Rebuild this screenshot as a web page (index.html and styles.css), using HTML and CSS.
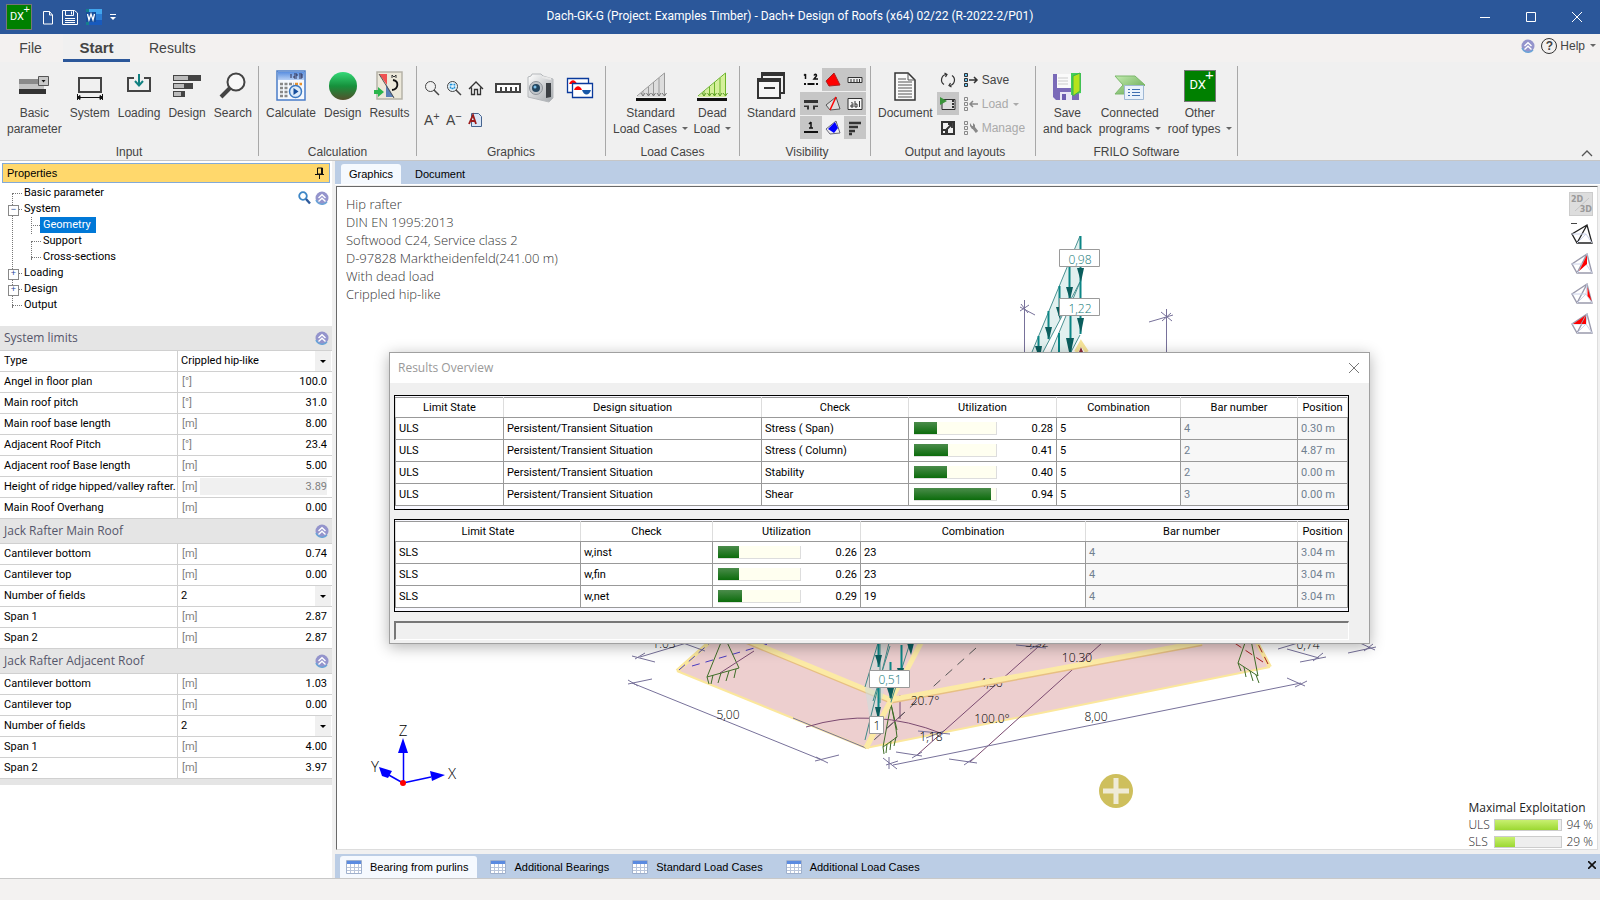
FILE: index.html
```html
<!DOCTYPE html>
<html lang="en">
<head>
<meta charset="utf-8">
<title>Dach-GK-G - Dach+ Design of Roofs</title>
<link rel="stylesheet" href="styles.css">
</head>
<body>
<svg class="defs" aria-hidden="true">
  <defs>
    <linearGradient id="gBall" x1="0" y1="0" x2="0" y2="1"><stop offset="0" stop-color="#35d978"/><stop offset=".5" stop-color="#16913c"/><stop offset="1" stop-color="#54502c"/></linearGradient>
    <linearGradient id="gCal" x1="0" y1="0" x2="0" y2="1"><stop offset="0" stop-color="#5b8fe0"/><stop offset="1" stop-color="#b7d0f5"/></linearGradient>
    <linearGradient id="gCam" x1="0" y1="0" x2="1" y2="1"><stop offset="0" stop-color="#ffffff"/><stop offset="1" stop-color="#a4a8ac"/></linearGradient>
    <linearGradient id="gGreen" x1="0" y1="0" x2="1" y2="1"><stop offset="0" stop-color="#c3ecb0"/><stop offset="1" stop-color="#5fa24c"/></linearGradient>
    <symbol id="chev" viewBox="0 0 14 14"><circle cx="7" cy="7" r="6.500" fill="#9494cc"/><path d="M1 9a6.500 6.500 0 0 0 11 2" fill="none" stroke="#6aa5d8" stroke-width="1.500"/><path d="M3.500 7L7 3.800 10.500 7M3.500 10.500L7 7.300l3.500 3.200" fill="none" stroke="#fff" stroke-width="1.400"/></symbol>
    <symbol id="tbl" viewBox="0 0 16 14"><path d="M.5.5h15v13H.5z" fill="#fff" stroke="#9fb0cc"/><path d="M1 1h14v3H1z" fill="#5b8be0"/><path d="M1 7.500h14M1 10.500h14M4.500 4v9M8.500 4v9M12.500 4v9" stroke="#b9c5da"/></symbol>
    <symbol id="roof" viewBox="0 0 22 22"><path d="M16 1L1 11l5 9h15zM16 1L6 20" fill="none" stroke="#9a9aac" stroke-width="1.400"/><path d="M1 11h14l6 9M15 11L6 20M15 11l1-10" fill="none" stroke="#ccd3ea"/></symbol>
  </defs>
</svg>
<div class="app">
  <header class="titlebar">
    <div class="quick">
      <span class="dx dx-small"><b>DX</b><i>+</i></span>
      <button aria-label="New"><svg width="12" height="15"><path d="M1.500 1.500h6l3 3.500v9h-9zM7.500 1.500V5h3" fill="none" stroke="#fff"/></svg></button>
      <button aria-label="Save"><svg width="16" height="15"><path d="M.5.5h12l3 2.500v11.500H.5zM3.500.5v5h8v-5M9.500 1.500v3M3 8.500h10M3 10.500h10M3 12.500h10" fill="none" stroke="#fff"/></svg></button>
      <button aria-label="Word"><svg width="16" height="16"><path d="M0 0h4v16H0z" fill="#157f8c"/><path d="M3 0h13v5H3z" fill="#41a5ee"/><path d="M3 5h13v6H3z" fill="#2b7cd3"/><path d="M3 11h13v5H3z" fill="#185abd"/><path d="M0 3h10v10H0z" fill="#174f9c"/><path d="M1.500 5l1.500 6 2-6 2 6 1.500-6" fill="none" stroke="#fff" stroke-width="1.300"/></svg></button>
      <button aria-label="Customize"><svg width="6" height="8"><path d="M0 1.500h6" stroke="#fff"/><path d="M0 4h6L3 7z" fill="#fff"/></svg></button>
    </div>
    <h1>Dach-GK-G (Project: Examples Timber) - Dach+ Design of Roofs (x64) 02/22 (R-2022-2/P01)</h1>
    <div class="winbtns">
      <button aria-label="Minimize"><svg width="10" height="10"><path d="M0 5.500h10" stroke="#fff"/></svg></button>
      <button aria-label="Maximize"><svg width="10" height="10"><path d="M.5.5h9v9h-9z" fill="none" stroke="#fff"/></svg></button>
      <button aria-label="Close"><svg width="10" height="10"><path d="M0 0l10 10M10 0L0 10" stroke="#fff"/></svg></button>
    </div>
  </header>

  <nav class="menu">
    <button class="m-file">File</button>
    <button class="m-start">Start</button>
    <button class="m-results">Results</button>
    <div class="help">
      <svg width="14" height="14"><use href="#chev"/></svg>
      <button><span class="q">?</span>Help<i class="car"></i></button>
    </div>
  </nav>

  <section class="ribbon">
    <div class="grp g-input">
      <div class="items">
        <button class="big"><svg width="32" height="32"><path d="M1 9h25v5H1z" fill="#8a8a8a"/><path d="M1 14h25v5H1z" fill="#c4c4c4"/><path d="M1 19h27v5H1z" fill="#333"/><path d="M20.500 6.500h10v9h-10z" fill="#c8c8c8" stroke="#555"/><path d="M23.500 10h4l-2 2.500z" fill="#111"/></svg><span>Basic<br>parameter</span></button>
        <button class="big"><svg width="32" height="32"><path d="M5 8h22v14H5z" fill="none" stroke="#444" stroke-width="2"/><path d="M3.500 24v6M28.500 24v6M3 27.500h26M3 27.500l3-2v4zM29 27.500l-3-2v4z" stroke="#111" fill="#111"/></svg><span>System</span></button>
        <button class="big"><svg width="32" height="32"><path d="M11 8H5v13h22V8h-6" fill="none" stroke="#444" stroke-width="2"/><path d="M16 4v10M12 11l4 4.500 4-4.500" fill="none" stroke="#108080" stroke-width="2"/></svg><span>Loading</span></button>
        <button class="big"><svg width="32" height="32"><path d="M2 5h28v6H2zM2 13h20v6H2zM2 21h12v6H2z" fill="#444"/><path d="M3 6h14v4H3zM3 14h10v4H3zM3 22h7v4H3z" fill="#bbb"/></svg><span>Design</span></button>
        <button class="big"><svg width="32" height="32"><circle cx="19" cy="12" r="8.500" fill="#f8f8f8" stroke="#444" stroke-width="2"/><path d="M13 18l-9 9" stroke="#444" stroke-width="4"/></svg><span>Search</span></button>
      </div>
      <h2>Input</h2>
    </div>
    <div class="grp g-calc">
      <div class="items">
        <button class="big"><svg width="32" height="32"><path d="M2 1h28v29H2z" fill="#f5f8fd" stroke="#4a7cc8" stroke-width="1.500"/><path d="M3 2h26v8H3z" fill="url(#gCal)"/><path d="M16 4v4M19 4h3v2h-3v2h3M24 4h3v4h-3M24 6h3" stroke="#335" fill="none"/><path d="M5 14h14M5 18h9M5 22h8M5 26h9" stroke="#888" stroke-width="2.500" stroke-dasharray="3 1.500"/><path d="M20 14h7" stroke="#e8902a" stroke-width="2.500" stroke-dasharray="3 1.500"/><circle cx="20.500" cy="21.500" r="6" fill="#dcebfa" stroke="#3b78c0" stroke-width="1.500"/><path d="M18.500 18v7l5-3.500z" fill="#174f9c"/></svg><span>Calculate</span></button>
        <button class="big"><svg width="32" height="32"><circle cx="16" cy="16" r="14" fill="url(#gBall)"/></svg><span>Design</span></button>
        <button class="big"><svg width="32" height="32"><path d="M4 2h25v27H4z" fill="#ece8da" stroke="#b5b2a8" stroke-width="1.500"/><path d="M6 4h8v11z" fill="#f05050"/><path d="M13 14v13h8z" fill="#5a80b8"/><path d="M6 4l15 24" stroke="#555"/><path d="M20 10c6 1 6 9-1 10" fill="none" stroke="#111" stroke-width="1.800"/><path d="M19 8V5l2 2 2-2v3" fill="none" stroke="#333"/><path d="M1 20h4v-3l6 5-6 5v-3H1z" fill="#2bb54c"/></svg><span>Results</span></button>
      </div>
      <h2>Calculation</h2>
    </div>
    <div class="grp g-gfx">
      <div class="items">
        <div class="mini">
          <button aria-label="Zoom"><svg width="16" height="16"><circle cx="6.500" cy="6.500" r="5" fill="none" stroke="#444"/><path d="M10 10l5 5" stroke="#444" stroke-width="1.500"/></svg></button>
          <button aria-label="Zoom window"><svg width="16" height="16"><circle cx="6.500" cy="6.500" r="5" fill="#eaf6fd" stroke="#444"/><path d="M4.500 4.500h4v4h-4z" fill="none" stroke="#1e90d8" stroke-width="1.500" stroke-dasharray="2 1"/><path d="M10 10l5 5" stroke="#444" stroke-width="1.500"/></svg></button>
          <button aria-label="Home"><svg width="16" height="16"><path d="M1 9l7-7 7 7M3.500 7.500v7h3v-5h3v5h3v-7" fill="none" stroke="#333" stroke-width="1.300"/></svg></button>
          <button aria-label="Larger text" class="let"><span>A<sup>+</sup></span></button>
          <button aria-label="Smaller text" class="let"><span>A<sup>−</sup></span></button>
          <button aria-label="Font"><svg width="16" height="16"><path d="M3.500 1.500h7l3 3v10h-10z" fill="#dbe7f8" stroke="#46648f"/><path d="M1 12L5 3l3 9M3 9h4" stroke="#9c1c1c" stroke-width="1.800" fill="none"/></svg></button>
        </div>
        <button class="tool" aria-label="Ruler"><svg width="28" height="14"><path d="M2 3h24v8H2z" fill="#fff" stroke="#444" stroke-width="2"/><path d="M7 6v5M12 6v5M17 6v5M22 6v5" stroke="#444" stroke-width="2"/></svg></button>
        <button class="tool" aria-label="Camera"><svg width="30" height="30"><path d="M2 4l3-1 1-2 9 0 2 2 10 3v19l-4 4L2 24z" fill="url(#gCam)" stroke="#b5b8bb"/><path d="M20 10l5 0v14l-5 1z" fill="#3c4044"/><path d="M16 4l9 2" stroke="#e8e8e8" stroke-width="2"/><circle cx="10" cy="15" r="6.500" fill="#c2c6ca" stroke="#8f949a"/><circle cx="10" cy="15" r="4" fill="#24465f"/><circle cx="9" cy="14" r="1.500" fill="#7cc0ea"/></svg></button>
        <button class="tool" aria-label="Pictures"><svg width="28" height="22"><path d="M1.500 1.500h21v14h-21z" fill="#fff" stroke="#0a3a9c" stroke-width="1.300"/><path d="M3 7c2-5 6-5 8 0z" fill="red"/><path d="M6.500 6.500h20v14h-20z" fill="#fff" stroke="#0a3a9c" stroke-width="1.300"/><path d="M8 13c2-5 6-5 8 0z" fill="red"/><path d="M16 13h9c-2 6-7 6-9 0z" fill="#1858a8"/></svg></button>
      </div>
      <h2>Graphics</h2>
    </div>
    <div class="grp g-lc">
      <div class="items">
        <button class="big"><svg width="32" height="32"><path d="M2 27L30 3v24z" fill="#ddd"/><path d="M2 26L29.500 3v23M8 21v5M13.500 17v9M18.500 12v14M24 8v18" stroke="#999" fill="none"/><path d="M6 23l2 3 2-3M11.500 23l2 3 2-3M16.500 23l2 3 2-3M22 23l2 3 2-3M27 23l2.500 3 2-3" fill="none" stroke="#777"/><path d="M1 29.500h30" stroke="#111" stroke-width="3"/></svg><span>Standard<br>Load Cases <i class="car"></i></span></button>
        <button class="big"><svg width="32" height="32"><path d="M2 27L30 3v24z" fill="#d5f09a"/><path d="M2 26L29.500 3v23M8 21v5M13.500 17v9M18.500 12v14M24 8v18" stroke="#6db52a" fill="none"/><path d="M6 23l2 3 2-3M11.500 23l2 3 2-3M16.500 23l2 3 2-3M22 23l2 3 2-3M27 23l2.500 3 2-3" fill="none" stroke="#5f9c28"/><path d="M1 29.500h30" stroke="#111" stroke-width="3"/></svg><span>Dead<br>Load <i class="car"></i></span></button>
      </div>
      <h2>Load Cases</h2>
    </div>
    <div class="grp g-vis">
      <div class="items">
        <button class="big"><svg width="32" height="32"><path d="M7 3h22v20H7z" fill="none" stroke="#333" stroke-width="2"/><path d="M6 4.500h24" stroke="#333" stroke-width="3"/><path d="M3 9h22v19H3z" fill="#f5f5f5" stroke="#333" stroke-width="2"/><path d="M2 10.500h24" stroke="#333" stroke-width="3"/><path d="M9 18h11" stroke="#333" stroke-width="2"/></svg><span>Standard</span></button>
        <div class="toggles">
          <button aria-label="Numbering"><svg width="18" height="16"><path d="M3.500 2v5M2 3.500L3.500 2M12 3.500c1-2 3.500-1 2 1L12 7h4" stroke="#111" stroke-width="1.500" fill="none"/><path d="M2 12h2m1.500 0h7m1.500 0h2" stroke="#111" stroke-width="2"/></svg></button>
          <button class="on" aria-label="Roof"><svg width="18" height="16"><path d="M10 1L2 9l3 5 11-1z" fill="red" stroke="#a22"/></svg></button>
          <button class="on" aria-label="Dimensions"><svg width="18" height="16"><path d="M2 5.500h14v5H2zM5 7v3M8 7v3M11 7v3M13.500 7v3" fill="#eee" stroke="#333"/></svg></button>
          <button class="on" aria-label="Supports"><svg width="18" height="16"><path d="M2 5.500h14" stroke="#333" stroke-width="3"/><path d="M2 9.500h5v4H2zM11 9.500h5v4h-5z" fill="#333"/><path d="M2 11h3v3H2zM13 11h3v3h-3z" fill="#c6c6c6"/></svg></button>
          <button class="on" aria-label="Rafter"><svg width="18" height="16"><path d="M12 1L2 9l4 5 10-1z" fill="#ddd" stroke="#555"/><path d="M12 1L6 14" stroke="red" stroke-width="1.500"/></svg></button>
          <button class="on" aria-label="Labels"><svg width="18" height="16"><path d="M2 2.500h14v11H2z" fill="#f5f5f5" stroke="#333"/><path d="M5 7c2-1 2 0 2 4H5V9h2M9 5v6h2V8H9M13.500 5v6" fill="none" stroke="#333"/></svg></button>
          <button class="on" aria-label="Bar number"><svg width="18" height="16"><path d="M9 2v6M7 4l2-2M7 8h4" stroke="#111" stroke-width="1.500"/><path d="M2 12h14" stroke="#111" stroke-width="2"/></svg></button>
          <button aria-label="Adjacent roof"><svg width="18" height="16"><path d="M12 1L2 9l4 5 10-1z" fill="#eee" stroke="#667"/><path d="M11 2l-7 7 6 4 4-5z" fill="#00f"/></svg></button>
          <button class="on" aria-label="Results list"><svg width="18" height="16"><path d="M3 3h12M3 7h9M3 11h6M3 14h3" stroke="#333" stroke-width="2.500"/></svg></button>
        </div>
      </div>
      <h2>Visibility</h2>
    </div>
    <div class="grp g-out">
      <div class="items">
        <button class="big"><svg width="32" height="32"><path d="M6 3h13l7 7v20H6z" fill="#fafafa" stroke="#333" stroke-width="1.500"/><path d="M19 3v7h7M9 9h8M9 12h14M9 15h14M9 18h14M9 21h14M9 24h14M9 27h14" fill="none" stroke="#555"/></svg><span>Document</span></button>
        <div class="toggles one">
          <button aria-label="Refresh"><svg width="16" height="16"><path d="M4 12.500A5.500 5.500 0 0 1 6 2.500M12 3.500a5.500 5.500 0 0 1-2 10M4.500 1l2.500 1.500L5.500 5M11.500 15L9 13.500l1.500-2.500" fill="none" stroke="#333" stroke-width="1.200"/></svg></button>
          <button class="on" aria-label="Play"><svg width="18" height="16"><path d="M3 3.500h13v10H3z" fill="#ddd" stroke="#333"/><path d="M14 4v9" stroke="#333" stroke-width="2" stroke-dasharray="2 1"/><path d="M1 1v8l7-4z" fill="#3a943a"/></svg></button>
          <button aria-label="Expand"><svg width="16" height="16"><path d="M2 2h12v12H2z" fill="none" stroke="#333" stroke-width="2"/><path d="M1 9h7v6H1z" fill="#333"/><path d="M3 11h2v2H3z" fill="#f0f0f0"/><path d="M6 10l6-6M8 4h4v4" stroke="#333" fill="none" stroke-width="1.800"/></svg></button>
        </div>
        <div class="list">
          <button><svg width="16" height="16"><path d="M1.500 1.500h3v3h-3zM1.500 6.500h3v3h-3zM1.500 11.500h3v3h-3z" fill="#6cc4f0" stroke="#333"/><path d="M6 8h8M11 5l3 3-3 3" stroke="#333" stroke-width="1.500" fill="none"/></svg>Save</button>
          <button disabled><svg width="16" height="16"><path d="M1.500 1.500h3v3h-3zM1.500 6.500h3v3h-3zM1.500 11.500h3v3h-3z" fill="none" stroke="#888"/><path d="M15 8H7M10 5L7 8l3 3" stroke="#888" stroke-width="1.500" fill="none"/></svg>Load <i class="car"></i></button>
          <button disabled><svg width="16" height="16"><path d="M1.500 1.500h3v3h-3zM1.500 6.500h3v3h-3zM1.500 11.500h3v3h-3z" fill="none" stroke="#888"/><path d="M10 7l4 5" stroke="#888" stroke-width="3"/><path d="M7 3v3l2 3h3V5l-2-2v3H9z" fill="#888"/></svg>Manage</button>
        </div>
      </div>
      <h2>Output and layouts</h2>
    </div>
    <div class="grp g-fr">
      <div class="items">
        <button class="big"><svg width="32" height="32"><path d="M2 4h26v26H5l-3-3z" fill="#7a6ab8"/><path d="M6 4h14v14H6z" fill="#fafafa"/><path d="M7 8h10M7 11h10M7 14h10" stroke="#ccc"/><path d="M9 22h12v8H9z" fill="#e8e6f5"/><path d="M11 24h4v6h-4z" fill="#6c5db0"/><path d="M20 3h10v20l-10 2z" fill="#43d058"/><path d="M22 6l7-3v18l-7 5z" fill="#b5e41c" stroke="#3eb04e"/></svg><span>Save<br>and back</span></button>
        <button class="big"><svg width="32" height="32"><path d="M1 6h20l10 9-9 9H1l8-9z" fill="url(#gGreen)" stroke="#7cb86c"/><path d="M10.500 15.500h19v14h-19z" fill="#eaf2fb" stroke="#9fb8d4"/><path d="M14 19.500h2m2 0h8M14 22.500h2m2 0h8M14 25.500h2m2 0h8" stroke="#3f6fb0"/></svg><span>Connected<br>programs <i class="car"></i></span></button>
        <button class="big"><span class="dx dx-big"><b>DX</b><i>+</i></span><span>Other<br>roof types <i class="car"></i></span></button>
      </div>
      <h2>FRILO Software</h2>
    </div>
    <button class="collapse" aria-label="Collapse ribbon"><svg width="12" height="7"><path d="M1 6l5-5 5 5" fill="none" stroke="#555" stroke-width="1.300"/></svg></button>
  </section>

  <main class="work">
    <aside class="side">
      <div class="side-head"><span>Properties</span><svg width="10" height="12"><path d="M2.500 1h5v6h-5zM0 7.500h9M4.500 8v4M6.500 1v6" fill="none" stroke="#111"/></svg></div>
      <div class="tree-wrap">
        <ul class="tree">
          <li><span>Basic parameter</span></li>
          <li class="box minus"><span>System</span>
            <ul>
              <li><span class="sel">Geometry</span></li>
              <li><span>Support</span></li>
              <li><span>Cross-sections</span></li>
            </ul>
          </li>
          <li class="box plus"><span>Loading</span></li>
          <li class="box plus"><span>Design</span></li>
          <li><span>Output</span></li>
        </ul>
        <div class="tree-tools">
          <svg width="13" height="14"><circle cx="5" cy="5" r="3.800" fill="#fff" stroke="#3d86c6" stroke-width="1.800"/><path d="M8 8l4 4.500" stroke="#2d5a9c" stroke-width="2.400"/></svg>
          <svg width="14" height="14"><use href="#chev"/></svg>
        </div>
      </div>
      <h3><span>System limits</span><svg width="14" height="14"><use href="#chev"/></svg></h3>
      <div class="row"><label for="a1">Type</label><select id="a1"><option>Crippled hip-like</option></select></div>
      <div class="row"><label for="a2">Angel in floor plan</label><i>[°]</i><input id="a2" value="100.0"></div>
      <div class="row"><label for="a3">Main roof pitch</label><i>[°]</i><input id="a3" value="31.0"></div>
      <div class="row"><label for="a4">Main roof base length</label><i>[m]</i><input id="a4" value="8.00"></div>
      <div class="row"><label for="a5">Adjacent Roof Pitch</label><i>[°]</i><input id="a5" value="23.4"></div>
      <div class="row"><label for="a6">Adjacent roof Base length</label><i>[m]</i><input id="a6" value="5.00"></div>
      <div class="row"><label for="a7">Height of ridge hipped/valley rafter.</label><i>[m]</i><input id="a7" value="3.89" disabled></div>
      <div class="row"><label for="a8">Main Roof Overhang</label><i>[m]</i><input id="a8" value="0.00"></div>
      <h3><span>Jack Rafter Main Roof</span><svg width="14" height="14"><use href="#chev"/></svg></h3>
      <div class="row"><label for="b1">Cantilever bottom</label><i>[m]</i><input id="b1" value="0.74"></div>
      <div class="row"><label for="b2">Cantilever top</label><i>[m]</i><input id="b2" value="0.00"></div>
      <div class="row"><label for="b3">Number of fields</label><select id="b3"><option>2</option></select></div>
      <div class="row"><label for="b4">Span 1</label><i>[m]</i><input id="b4" value="2.87"></div>
      <div class="row"><label for="b5">Span 2</label><i>[m]</i><input id="b5" value="2.87"></div>
      <h3><span>Jack Rafter Adjacent Roof</span><svg width="14" height="14"><use href="#chev"/></svg></h3>
      <div class="row"><label for="c1">Cantilever bottom</label><i>[m]</i><input id="c1" value="1.03"></div>
      <div class="row"><label for="c2">Cantilever top</label><i>[m]</i><input id="c2" value="0.00"></div>
      <div class="row"><label for="c3">Number of fields</label><select id="c3"><option>2</option></select></div>
      <div class="row"><label for="c4">Span 1</label><i>[m]</i><input id="c4" value="4.00"></div>
      <div class="row"><label for="c5">Span 2</label><i>[m]</i><input id="c5" value="3.97"></div>
      <div class="side-end"></div>
    </aside>

    <section class="view">
      <div class="tabs top"><button class="cur">Graphics</button><button>Document</button></div>
      <div class="canvas">
        <svg class="scene" viewBox="337 187 1260 662">
          <!-- upper load diagram -->
          <path d="M1080 236L1032 352h11l37-70z" fill="#e2f0ef"/>
          <path d="M1080 282l-29 70h20l9-17z" fill="#e2f0ef"/>
          <path d="M1080 236l-48 116M1080 282l-37 70M1080 282l-29 70M1080 335l-9 17" fill="none" stroke="#4a9292"/>
          <path d="M1080.500 236v46M1069.500 262v36M1059.500 286v30M1048.500 311v28M1038.500 336v16M1080.500 282v52M1070.500 300v52M1059 333v19" stroke="#0c8686" stroke-width="2"/>
          <path d="M1077 268h7l-3 14zM1066 287h7l-3 13zM1056 307h6l-2 13zM1045 327h7l-3 13zM1035 346h7l-1 6h-4zM1077 318h7l-3 15zM1066 338h8l-3 14h-2z" fill="#0b5d5d"/>
          <path d="M1076 352l5-9 6 9" fill="none" stroke="#f7e59a" stroke-width="4"/><path d="M1079 352l2-5 2 5" fill="#8c2a3a"/>
          <g stroke="#77719a" fill="none">
            <path d="M1024.500 300v52M1020 307l15 8M1020 311l9-6M1021 304l7 9M1166.500 309v43M1149 322l24-7M1161 312l11 9M1162 321l9-8"/>
          </g>
          <g fill="#fff" stroke="#9a9a9a"><path d="M1059.500 249.500h40v17h-40zM1059.500 298.500h40v17h-40z"/></g>
          <g class="lbl teal"><text x="1080" y="264">0,98</text><text x="1080" y="313">1,22</text></g>
          <!-- base plane -->
          <path d="M677 671l35-31h542l16 27-404 81z" fill="#edcfcf"/>
          <path d="M677 671l189 77 404-81" fill="none" stroke="#fbe79c" stroke-width="2"/>
          <path d="M677 671l36-32M1270 667l-15-28" stroke="#fbe79c" stroke-width="4"/>
          <path d="M679 670l32-28" stroke="#4a3cc0" stroke-dasharray="8 5"/>
          <path d="M692 666l90-26" stroke="#4a3cc0" stroke-dasharray="8 6"/>
          <path d="M1268 664l-12-24M1263 662l-36-24" stroke="#a82020" stroke-dasharray="8 5"/>
          <path d="M793 718l73 30" stroke="#77719a"/>
          <g fill="none" stroke="#3f6e28">
            <path d="M722 640l-15 37 32-9-13-28M707 677l2 7M713 675l-2 9M721 673l-3 10M729 671l-3 10M736 669l-2 9"/>
            <path d="M1246 640l-8 23 20 13-7-36M1238 663l3 8M1244 667l2 10M1250 671l3 10M1256 675l3 8"/>
            <path d="M891 704l-8 43 14-10-1-8zM883 747l1 7M887 744l-1 9M891 741l-1 9M896 737l-2 9M891 704l6 26"/>
          </g>
          <g fill="none" stroke="#7b4a70"><path d="M806 727q68-21 137 7M1102 643L970 762M1038 647L917 755M720 673l34-22M887 728l18-16M900 695v24"/></g>
          <path d="M976 648L874 740" stroke="#555" stroke-dasharray="9 7" fill="none"/>
          <g class="lbl"><text x="991" y="687">4,36</text></g>
          <path d="M744 641l145 60M889 702l313-58" stroke="#e7bf83" stroke-width="4" fill="none"/>
          <path d="M744 639l145 60M889 700l313-58M866 748l56-107" stroke="#fceaa5" stroke-width="5" fill="none"/>
          <path d="M878 643l-13 46 8 50 18-80-10 12 6-28z" fill="#cfdcdb" opacity=".6"/>
          <path d="M878 643l-13 44M889 643l-24 97M910 643l-20 62M880 643v60M873 701l17-55" stroke="#3e8a88" fill="none"/>
          <path d="M878.500 643v24M890.500 662v36M878.500 688v30M901.500 645v28" stroke="#0c8686" stroke-width="2"/>
          <path d="M875 655h7l-3 12zM907 643h7l-3 12zM897 668h7l-3 12zM887 688h7l-3 12zM875 707h6l-3 12z" fill="#0b5d5d"/>
          <path d="M866 748l24-46" stroke="#fceaa5" stroke-width="5"/>
          <g stroke="#77719a" fill="none">
            <path d="M893 765l408-82M632 683l190 77M640 657l50-15"/>
            <path d="M628 684l24-5M628 680l10 6M815 761l24-6M816 757l12 6M632 656l23 6M635 659l10-6M683 643l22 8M886 765l12-4M883 758l14 11M889 769v-12M1287 678l18 8M1295 687l12-6M896 752l26 4M912 758l10-6M949 759l28 4M964 765l10-7M918 731l32 3M926 738l18-7M1016 645l30 3M1030 649l12-6M1300 662l26-5M1287 649l32 9M1313 661l10-8M1348 653l28-6M1278 649l20-6M1360 643l15 7M1364 651l9-7"/>
          </g>
          <g class="lbl">
            <text x="728" y="719">5,00</text><text x="1096" y="721">8,00</text><text x="992" y="723">100.0°</text>
            <text x="925" y="705">20.7°</text><text x="931" y="741">1,18</text>
            <text x="1077" y="662">10.30</text><text x="1308" y="649">0,74</text><text x="664" y="648">1.03</text><text x="1037" y="647">3.32</text>
          </g>
          <path d="M869.500 670.500h40v17h-40zM869.500 716.500h14v17h-14z" fill="#fff" stroke="#9a9a9a"/>
          <g class="lbl"><text class="tl" x="890" y="684">0,51</text><text x="877" y="730">1</text></g>
          <!-- axes -->
          <path d="M403.500 783V750M403 783l28-6M403 783l-16-9" stroke="#00f" stroke-width="1.500"/>
          <path d="M403 738l-5 15h10zM445 775l-15-4 2 10zM379 767l3 9 6 2 4-7z" fill="#00f"/>
          <circle cx="403" cy="783" r="3" fill="red"/>
          <g class="axis"><text x="403" y="736">Z</text><text x="375" y="772">Y</text><text x="452" y="779">X</text></g>
          <circle cx="1116" cy="791" r="17" fill="#cebf5d"/><path d="M1103 791h26M1116 778v26" stroke="#efebd6" stroke-width="5"/>
        </svg>
        <div class="info">Hip rafter<br>DIN EN 1995:2013<br>Softwood C24, Service class 2<br>D-97828 Marktheidenfeld(241.00 m)<br>With dead load<br>Crippled hip-like</div>
        <div class="vtools">
          <button class="v23" aria-label="2D/3D"><svg width="24" height="24"><path d="M5 18L19 5" stroke="#c5c5c5"/></svg><b>2D</b><b>3D</b></button>
          <button aria-label="View 1"><svg width="22" height="22"><path d="M16 2L1 11l5 9h15zM16 2L6 20" fill="none" stroke="#222" stroke-width="1.300"/><path d="M1 11h14l6 9M15 11L6 20" fill="none" stroke="#ccd3ea"/><path d="M0 .5h6" stroke="#444"/></svg></button>
          <button aria-label="View 2"><svg width="22" height="22"><use href="#roof"/><path d="M16 2v9l-8 7z" fill="red"/></svg></button>
          <button aria-label="View 3"><svg width="22" height="22"><use href="#roof"/><path d="M16.500 4l4 14-4-5z" fill="red"/></svg></button>
          <button aria-label="View 4"><svg width="22" height="22"><use href="#roof"/><path d="M15 2v9H2z" fill="red"/><path d="M15 2l-5 9" stroke="#99a"/></svg></button>
        </div>
        <div class="exploit">
          <p>Maximal Exploitation</p>
          <div><span>ULS</span><span class="meter"><i style="width:94%"></i></span><span>94 %</span></div>
          <div><span>SLS</span><span class="meter"><i style="width:29%"></i></span><span>29 %</span></div>
        </div>
      </div>
      <div class="tabs bottom">
        <button class="cur"><svg width="16" height="14"><use href="#tbl"/></svg>Bearing from purlins</button>
        <button><svg width="16" height="14"><use href="#tbl"/></svg>Additional Bearings</button>
        <button><svg width="16" height="14"><use href="#tbl"/></svg>Standard Load Cases</button>
        <button><svg width="16" height="14"><use href="#tbl"/></svg>Additional Load Cases</button>
        <button class="tabx" aria-label="Close panel"><svg width="8" height="8"><path d="M0 0l8 8M8 0L0 8" stroke="#111" stroke-width="1.600"/></svg></button>
      </div>
    </section>
  </main>
  <footer class="status"></footer>

  <div class="dialog" role="dialog" aria-label="Results Overview">
    <div class="dlg-head"><span>Results Overview</span><button aria-label="Close"><svg width="12" height="12"><path d="M1 1l10 10M11 1L1 11" stroke="#777"/></svg></button></div>
    <div class="dlg-body">
      <div class="frame"><table>
        <colgroup><col style="width:108px"><col style="width:258px"><col style="width:147px"><col style="width:148px"><col style="width:124px"><col style="width:117px"><col></colgroup>
        <tr><th>Limit State</th><th>Design situation</th><th>Check</th><th>Utilization</th><th>Combination</th><th>Bar number</th><th>Position</th></tr>
        <tr><td>ULS</td><td>Persistent/Transient Situation</td><td>Stress ( Span)</td><td><div class="u"><span><i style="width:28%"></i></span>0.28</div></td><td>5</td><td class="d">4</td><td class="d">0.30 m</td></tr>
        <tr><td>ULS</td><td>Persistent/Transient Situation</td><td>Stress ( Column)</td><td><div class="u"><span><i style="width:41%"></i></span>0.41</div></td><td>5</td><td class="d">2</td><td class="d">4.87 m</td></tr>
        <tr><td>ULS</td><td>Persistent/Transient Situation</td><td>Stability</td><td><div class="u"><span><i style="width:40%"></i></span>0.40</div></td><td>5</td><td class="d">2</td><td class="d">0.00 m</td></tr>
        <tr><td>ULS</td><td>Persistent/Transient Situation</td><td>Shear</td><td><div class="u"><span><i style="width:94%"></i></span>0.94</div></td><td>5</td><td class="d">3</td><td class="d">0.00 m</td></tr>
      </table></div>
      <div class="frame"><table>
        <colgroup><col style="width:185px"><col style="width:132px"><col style="width:148px"><col style="width:225px"><col style="width:212px"><col></colgroup>
        <tr><th>Limit State</th><th>Check</th><th>Utilization</th><th>Combination</th><th>Bar number</th><th>Position</th></tr>
        <tr><td>SLS</td><td>w,inst</td><td><div class="u"><span><i style="width:26%"></i></span>0.26</div></td><td>23</td><td class="d">4</td><td class="d">3.04 m</td></tr>
        <tr><td>SLS</td><td>w,fin</td><td><div class="u"><span><i style="width:26%"></i></span>0.26</div></td><td>23</td><td class="d">4</td><td class="d">3.04 m</td></tr>
        <tr><td>SLS</td><td>w,net</td><td><div class="u"><span><i style="width:29%"></i></span>0.29</div></td><td>19</td><td class="d">4</td><td class="d">3.04 m</td></tr>
      </table></div>
      <div class="dlg-status"></div>
    </div>
  </div>
</div>
</body>
</html>
```
FILE: styles.css
```css
* { box-sizing: border-box; }
body { margin: 0; font: 11px/16px Roboto, "Liberation Sans", sans-serif; color: #000; background: #f0f0f0; }
button, input, select { font: inherit; color: inherit; background: none; border: 0; padding: 0; margin: 0; border-radius: 0; }
h1, h2, h3, p { margin: 0; font-weight: 400; }
svg { display: block; flex: none; }
i { font-style: normal; }
.defs { position: absolute; width: 0; height: 0; }
.app { position: relative; display: flex; flex-direction: column; min-height: 100vh; overflow: hidden; }

/* title bar */
.titlebar { display: grid; grid-template-columns: 1fr auto 1fr; align-items: center; height: 34px; background: #2b579a; color: #fff; }
.titlebar h1 { font: 12px/16px Roboto, sans-serif; padding: 0 20px 2px 0; }
.quick { display: flex; align-items: center; gap: 8px; padding-left: 6px; }
.quick .dx { margin-right: 2px; }
.winbtns { display: flex; justify-content: flex-end; }
.winbtns button { width: 46px; height: 34px; display: flex; align-items: center; justify-content: center; }
.dx { position: relative; display: block; background: #008000; border: 1px solid #777; color: #fff; }
.dx b { position: absolute; left: 0; right: 4px; text-align: center; font: 400 11px/12px Roboto, sans-serif; }
.dx i { position: absolute; right: 1px; top: 0; font: 11px/8px "Liberation Sans", sans-serif; }
.dx-small { width: 26px; height: 26px; }
.dx-small b { top: 6px; }
.dx-big { width: 32px; height: 32px; margin: 2px 0; }
.dx-big b { top: 8px; font-size: 13px; }
.dx-big i { font-size: 15px; }

/* menu row */
.menu { display: flex; height: 28px; background: #f3f1f0; color: #444; font: 14px/28px "Liberation Sans", sans-serif; }
.menu > button { padding: 0 19px; }
.menu .m-file { width: 63px; padding: 0 2px 0 0; }
.menu .m-start { width: 67px; padding: 0; font-size: 15px; font-weight: 700; border-bottom: 3px solid #2b579a; background: #f0f0f0; }
.help { margin-left: auto; display: flex; align-items: center; gap: 6px; padding: 0 4px 5px 0; }
.help button { display: flex; align-items: center; gap: 3px; font-size: 12px; line-height: 16px; }
.q { width: 16px; height: 16px; border: 1px solid #333; border-radius: 50%; text-align: center; line-height: 14px; font-weight: 700; }
.car { display: inline-block; border: 3px solid transparent; border-top-color: #666; border-bottom: 0; margin-left: 2px; vertical-align: 3px; }

/* ribbon */
.ribbon { display: flex; height: 99px; border-bottom: 1px solid #c6c6c6; padding: 4px 0 0; font: 12px/16px "Liberation Sans", sans-serif; color: #444; }
.grp { display: flex; flex-direction: column; justify-content: space-between; height: 90px; border-right: 1px solid #a8a8a8; padding: 0 7px; }
.grp h2 { font-size: 12px; line-height: 16px; height: 12px; text-align: center; }
.items { display: flex; gap: 6px; padding-top: 2px; align-items: flex-start; }
.big { display: flex; flex-direction: column; align-items: center; white-space: nowrap; gap: 1px; }
.big > svg { margin: 2px 0; }
.g-input { width: 259px; }
.g-input .items, .g-calc .items { gap: 8px; }
.g-calc { width: 158px; }
.g-gfx { width: 189px; }
.g-lc { width: 134px; }
.g-vis { width: 131px; }
.g-out { width: 165px; }
.g-fr { width: 202px; }
.g-fr .items { gap: 7px; }
.mini { display: grid; grid-template-columns: repeat(3, 22px); grid-auto-rows: 32px; padding-top: 4px; }
.mini button { display: flex; align-items: center; justify-content: flex-start; }
.g-gfx .items { gap: 4px; }
.g-gfx .tool:last-child { margin-left: 6px; }
.g-lc .items { gap: 5px; }
.let { font-size: 14px; }
.let sup { font-size: 11px; line-height: 8px; vertical-align: 5px; }
.tool { height: 40px; display: flex; align-items: center; }
.g-vis .items, .g-out .items { gap: 4px; }
.toggles { display: grid; grid-template-columns: repeat(3, 22px); grid-auto-rows: 24px; }
.toggles.one { grid-template-columns: 22px; }
.toggles button { height: 23px; display: flex; align-items: center; justify-content: center; }
.toggles .on { background: #c6c6c6; }
.g-vis, .g-out { padding-right: 3px; }
.list { display: grid; grid-auto-rows: 24px; }
.list button { display: flex; align-items: center; gap: 3px; }
.list button:disabled { color: #aaa; }
.list .car { border-top-color: #aaa; }
.collapse { margin: auto 7px 3px auto; }

/* work area */
.work { flex: 1; display: flex; gap: 3px; }
.side { width: 332px; flex: none; background: #fff; padding-top: 2px; }
.side-head { height: 20px; margin: 0 2px; padding: 0 4px 0 4px; border: 1px solid #82aad8; background: #ffd86c; display: flex; justify-content: space-between; align-items: center; font-family: "Liberation Sans", sans-serif; }
.tree-wrap { display: flex; justify-content: space-between; height: 143px; }
.tree-tools { display: flex; gap: 4px; padding: 8px 3px; }
.tree, .tree ul { list-style: none; margin: 0; padding: 0; }
.tree { padding: 2px 0 0 12px; line-height: 16px; }
.tree li { position: relative; padding-left: 12px; }
.tree ul { padding-left: 7px; }
.tree span { display: inline-block; }
.tree li::before { content: ""; position: absolute; left: 0; top: 8px; width: 9px; height: calc(100% + 1px); border: dotted #777; border-width: 1px 0 0 1px; }
.tree li:last-child::before { height: 1px; }
.tree li li:first-child::before { top: 0; border-top: 0; }
.tree li li:first-child::after { content: ""; position: absolute; left: 0; top: 8px; width: 9px; border-top: 1px dotted #777; }
.tree .sel { background: #0078d7; color: #fff; padding: 0 5px 0 3px; margin-left: -3px; }
.tree .box::after { position: absolute; left: -4px; top: 4px; width: 9px; height: 9px; border: 1px solid #888; background: #fff; color: #2a4a9a; font: 9px/7px "Liberation Sans", sans-serif; text-align: center; }
.tree .minus::after { content: "−"; }
.tree .plus::after { content: "+"; }
.side h3 { height: 25px; background: #e5e5e5; border-bottom: 1px solid #d0d0d0; display: flex; align-items: center; justify-content: space-between; padding: 0 3px 0 4px; color: #55566a; font: 12px/16px "Open Sans", sans-serif; }
.row { display: flex; height: 21px; border-bottom: 1px solid #d0d0d0; line-height: 20px; }
.row label { width: 178px; flex: none; padding-left: 4px; border-right: 1px solid #d0d0d0; white-space: nowrap; }
.row i { width: 22px; padding-left: 4px; color: #808080; flex: none; }
.row input { flex: 1; min-width: 0; text-align: right; margin-right: 5px; height: 20px; }
.row input:disabled { background: #f0f0f0; color: #808080; height: 17px; margin-top: 1px; }
.row select { appearance: none; flex: 1; padding-left: 3px; background: linear-gradient(#f0f0f0, #f0f0f0) right 1px center / 16px 20px no-repeat; }
.row:has(select) { position: relative; }
.row:has(select)::after { content: ""; position: absolute; right: 6px; top: 9px; border: 3px solid transparent; border-top-color: #000; border-bottom: 0; }
.side-end { height: 6px; background: #e5e5e5; }

.view { flex: 1; min-width: 0; display: flex; flex-direction: column; }
.tabs { display: flex; background: #bbcde5; font-family: "Liberation Sans", sans-serif; }
.tabs button { display: flex; align-items: center; }
.tabs .cur { background: #f5f9fe; border-radius: 3px 3px 0 0; }
.top { height: 24px; padding: 3px 6px 0; border-bottom: 1px solid #fff; }
.top button { padding: 0 7px; }
.top .cur { margin-right: 7px; padding: 0 8px; }
.canvas { position: relative; flex: 1; background: #fff; margin: 1px 2px 4px 1px; border: 1px solid #696969; border-right-color: #ddd; border-bottom-color: #ddd; min-height: 664px; }
.scene { position: absolute; left: 0; top: 0; width: 100%; height: 100%; }
.lbl text { font: 300 12px "Open Sans", sans-serif; text-anchor: middle; fill: #000; }
.lbl.teal text, .lbl .tl { fill: #147878; }
.axis text { font: 300 15px "Open Sans", sans-serif; text-anchor: middle; }
.info { position: relative; padding: 8px 9px; font: 300 13px/18px "Open Sans", sans-serif; color: #333; }
.vtools { position: absolute; right: 4px; top: 5px; display: grid; gap: 8px; justify-items: end; }
.vtools button { height: 22px; }
.vtools .v23 { position: relative; width: 24px; height: 24px; margin-bottom: -1px; background: #ddd; border: 1px solid #ccc; color: #999; font: 700 8px/9px "DejaVu Sans", sans-serif; }
.v23 b { position: absolute; left: 1px; top: 2px; }
.v23 b + b { left: auto; right: 0; top: 12px; }
.v23 svg { position: absolute; left: 0; top: 0; }
.exploit { position: absolute; right: 4px; bottom: -1px; font: 300 12px/17px "Open Sans", sans-serif; color: #222; }
.exploit p { padding-right: 4px; }
.exploit div { display: flex; align-items: center; gap: 4px; }
.exploit span:first-child { width: 22px; }
.meter { width: 68px; height: 12px; border: 1px solid #ccc; background: #eee; }
.meter i { display: block; height: 10px; background: linear-gradient(#c8f070, #9cd832); }
.bottom { height: 24px; padding: 2px 4px 0 5px; }
.bottom button { padding: 0 10px 0 6px; gap: 8px; margin-right: 7px; }
.bottom .cur { padding-right: 9px; }
.bottom .tabx { margin: 0 0 0 auto; padding: 0 0 4px; }
.status { height: 22px; border-top: 1px solid #c8c8c8; background: #f3f2f1; }

/* floating results window */
.dialog { position: absolute; left: 389px; top: 352px; width: 981px; background: #f0f0f0; border: 1px solid #a0a0a0; box-shadow: 0 3px 14px rgba(0,0,0,.3); }
.dlg-head { height: 30px; background: #fff; display: flex; align-items: center; justify-content: space-between; padding: 0 9px 0 8px; color: #999; font: 12px/16px "Open Sans", sans-serif; }
.dlg-body { padding: 12px 20px 3px 4px; }
.frame { border: 1px solid #000; padding: 1px 0 3px; background: #f8f8ff; margin-bottom: 9px; }
.dialog table { width: 100%; table-layout: fixed; border-collapse: collapse; background: #fff; }
.dialog th { height: 20px; padding: 0; font-weight: 400; border: 1px solid #999; border-color: #999 #ddd; }
.dialog td { height: 22px; padding: 0 3px; border: 1px solid #999; }
.dialog .d { background: #f7f7f7; color: #708090; }
.u { display: flex; justify-content: space-between; align-items: center; padding-left: 2px; }
.u span { width: 83px; height: 13px; background: #fffff0; border: solid #ddd; border-width: 0 1px 1px 0; }
.u i { display: block; height: 12px; background: linear-gradient(#4b8c4b, #0c6c0c); }
.dlg-status { height: 19px; border: 1px solid #fff; border-top: 2px solid #777; border-left: 2px solid #777; }
```
